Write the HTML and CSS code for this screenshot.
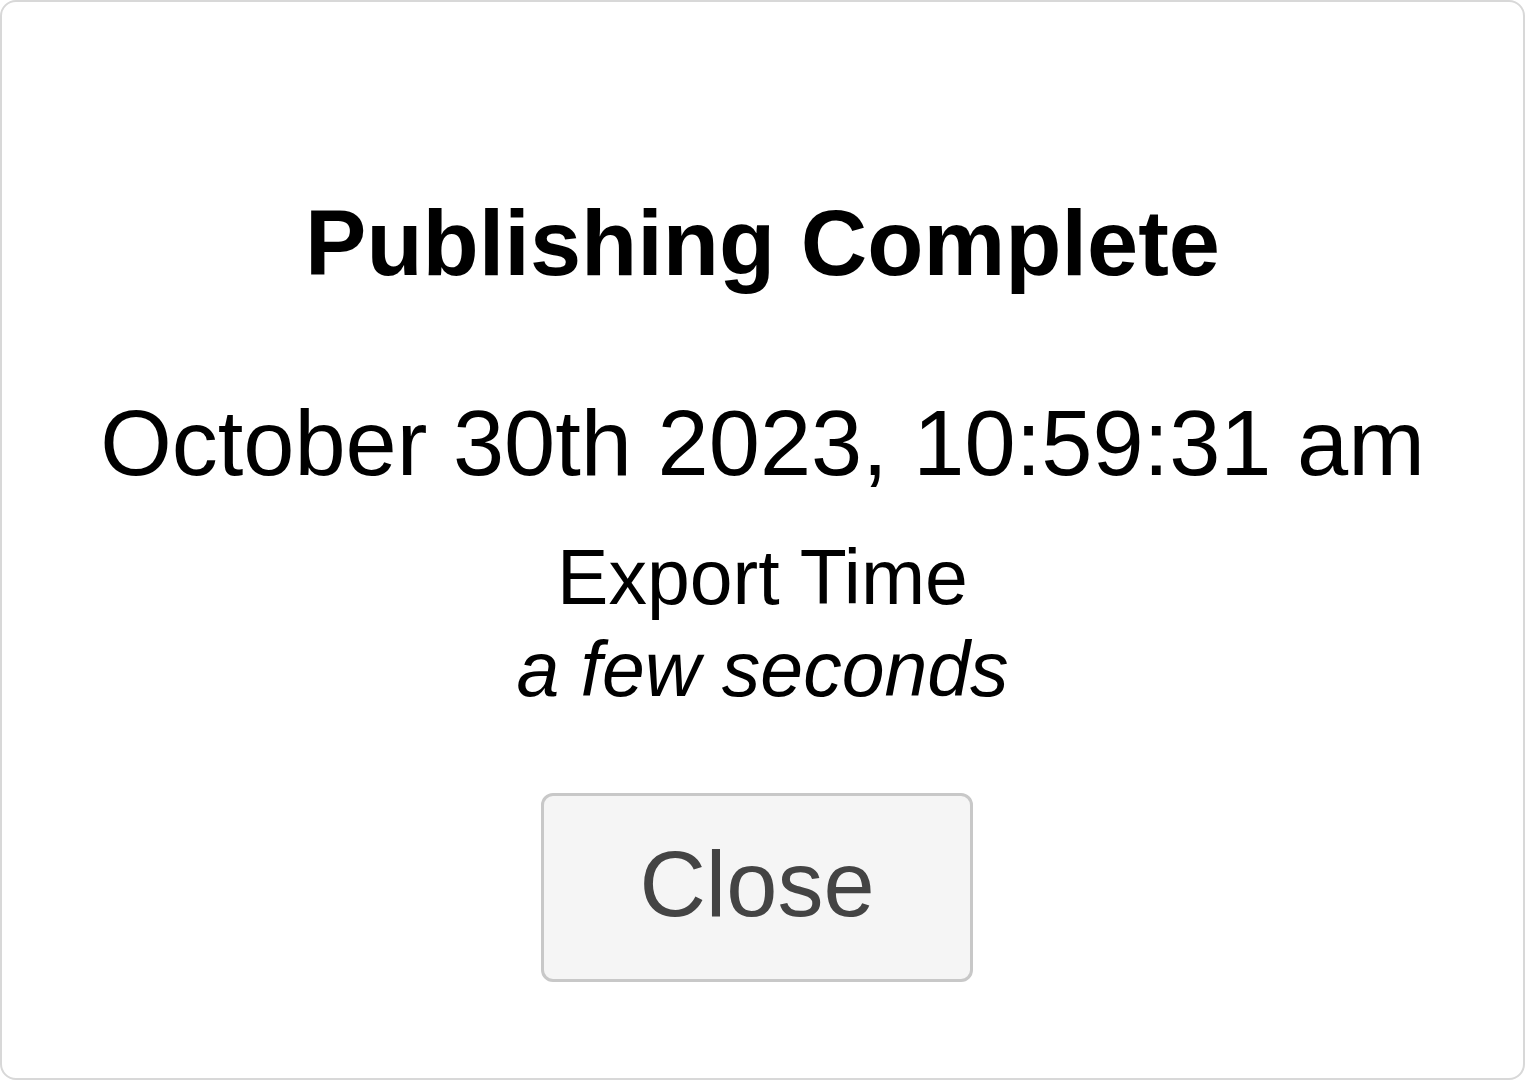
FILE: index.html
```html
<!DOCTYPE html>
<html lang="en">
<head>
<meta charset="utf-8">
<title>Publishing Complete</title>
<link rel="stylesheet" href="styles.css">
</head>
<body>
<div class="dialog">
  <h1 class="title">Publishing Complete</h1>
  <div class="date">October 30th 2023, 10:59:31 am</div>
  <div class="export">
    <div class="export-label">Export Time</div>
    <div class="export-value">a few seconds</div>
  </div>
  <button class="close-btn" type="button">Close</button>
</div>
</body>
</html>
```

FILE: styles.css
```css
html, body {
  margin: 0;
  padding: 0;
  background: #ffffff;
}

body {
  font-family: "Liberation Sans", Arial, sans-serif;
  color: #000;
}

.dialog {
  box-sizing: border-box;
  width: 1525px;
  height: 1080px;
  border: 2px solid #d8d8d8;
  border-radius: 16px;
  background: #ffffff;
  display: flex;
  flex-direction: column;
  align-items: center;
  padding-top: 185px;
}

.title {
  margin: 0;
  font-size: 92px;
  line-height: 112px;
  font-weight: 700;
}

.date {
  margin-top: 88px;
  font-size: 92px;
  line-height: 112px;
}

.export {
  margin-top: 32px;
  text-align: center;
  font-size: 77px;
  line-height: 92px;
}

.export-value {
  font-style: italic;
}

.close-btn {
  box-sizing: border-box;
  margin-top: 78px;
  margin-right: 11px;
  width: 432px;
  height: 189px;
  padding: 32px 0 39px;
  border: 3px solid #c8c8c8;
  border-radius: 12px;
  background: #f5f5f5;
  color: #444444;
  font-family: "Liberation Sans", Arial, sans-serif;
  font-size: 92px;
  line-height: 112px;
}
```
